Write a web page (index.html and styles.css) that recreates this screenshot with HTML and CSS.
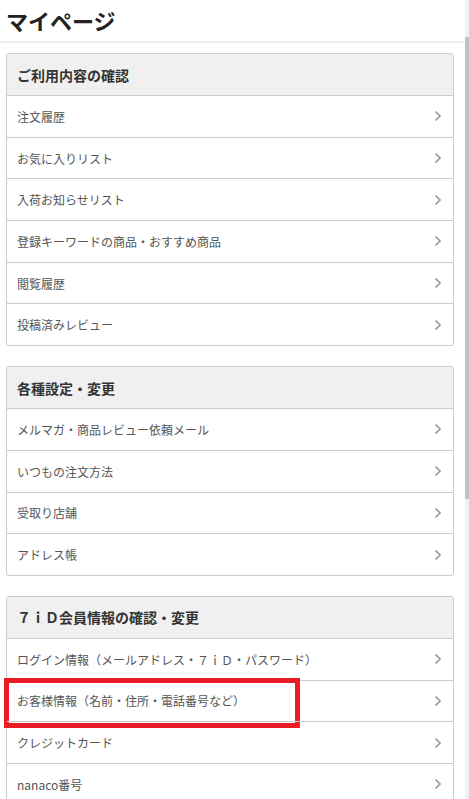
FILE: index.html
```html
<!DOCTYPE html>
<html lang="ja">
<head>
<meta charset="utf-8">
<title>マイページ</title>
<link rel="stylesheet" href="styles.css">
</head>
<body>
<div class="page">
  <header class="page-header">
    <h1 class="page-title">マイページ</h1>
  </header>
  <main class="content">
    <section class="card">
      <h2 class="card-title">ご利用内容の確認</h2>
      <a class="row" href="#"><span>注文履歴</span><svg class="chev" viewBox="0 0 8 12"><polyline points="1.5,1.5 6,6 1.5,10.5"/></svg></a>
      <a class="row" href="#"><span>お気に入りリスト</span><svg class="chev" viewBox="0 0 8 12"><polyline points="1.5,1.5 6,6 1.5,10.5"/></svg></a>
      <a class="row" href="#"><span>入荷お知らせリスト</span><svg class="chev" viewBox="0 0 8 12"><polyline points="1.5,1.5 6,6 1.5,10.5"/></svg></a>
      <a class="row" href="#"><span>登録キーワードの商品・おすすめ商品</span><svg class="chev" viewBox="0 0 8 12"><polyline points="1.5,1.5 6,6 1.5,10.5"/></svg></a>
      <a class="row" href="#"><span>閲覧履歴</span><svg class="chev" viewBox="0 0 8 12"><polyline points="1.5,1.5 6,6 1.5,10.5"/></svg></a>
      <a class="row" href="#"><span>投稿済みレビュー</span><svg class="chev" viewBox="0 0 8 12"><polyline points="1.5,1.5 6,6 1.5,10.5"/></svg></a>
    </section>
    <section class="card">
      <h2 class="card-title">各種設定・変更</h2>
      <a class="row" href="#"><span>メルマガ・商品レビュー依頼メール</span><svg class="chev" viewBox="0 0 8 12"><polyline points="1.5,1.5 6,6 1.5,10.5"/></svg></a>
      <a class="row" href="#"><span>いつもの注文方法</span><svg class="chev" viewBox="0 0 8 12"><polyline points="1.5,1.5 6,6 1.5,10.5"/></svg></a>
      <a class="row" href="#"><span>受取り店舗</span><svg class="chev" viewBox="0 0 8 12"><polyline points="1.5,1.5 6,6 1.5,10.5"/></svg></a>
      <a class="row" href="#"><span>アドレス帳</span><svg class="chev" viewBox="0 0 8 12"><polyline points="1.5,1.5 6,6 1.5,10.5"/></svg></a>
    </section>
    <section class="card">
      <h2 class="card-title">７ｉＤ会員情報の確認・変更</h2>
      <a class="row" href="#"><span>ログイン情報（メールアドレス・７ｉＤ・パスワード）</span><svg class="chev" viewBox="0 0 8 12"><polyline points="1.5,1.5 6,6 1.5,10.5"/></svg></a>
      <a class="row row-marked" href="#"><span>お客様情報（名前・住所・電話番号など）</span><svg class="chev" viewBox="0 0 8 12"><polyline points="1.5,1.5 6,6 1.5,10.5"/></svg><i class="highlight"></i></a>
      <a class="row" href="#"><span>クレジットカード</span><svg class="chev" viewBox="0 0 8 12"><polyline points="1.5,1.5 6,6 1.5,10.5"/></svg></a>
      <a class="row" href="#"><span>nanaco番号</span><svg class="chev" viewBox="0 0 8 12"><polyline points="1.5,1.5 6,6 1.5,10.5"/></svg></a>
    </section>
  </main>
</div>
<div class="scrollbar"><div class="scroll-thumb"></div></div>
</body>
</html>
```

FILE: styles.css
```css
html {
  overflow: hidden;
}
body {
  margin: 0;
  background: #fff;
  font-family: "Noto Sans CJK JP", "Noto Sans", sans-serif;
  color: #333;
}
.page {
  width: 465px;
}
.page-header {
  border-bottom: 2px solid #eeeeee;
  box-sizing: border-box;
  height: 43px;
  padding-left: 6px;
  display: flex;
  align-items: center;
}
.page-title {
  margin: 0;
  font-size: 22px;
  font-weight: bold;
  color: #222;
  line-height: 1;
  position: relative;
  top: -1px;
}
.content {
  padding: 10px 11px 0 6px;
}
.card {
  border: 1px solid #cccccc;
  border-radius: 3px;
  margin-bottom: 20px;
}
.card-title {
  margin: 0;
  height: 41px;
  background: #f0f0f0;
  border-radius: 3px 3px 0 0;
  font-size: 14px;
  font-weight: bold;
  color: #333;
  display: flex;
  align-items: center;
  padding-left: 10px;
}
.row {
  position: relative;
  display: flex;
  align-items: center;
  justify-content: space-between;
  height: 40.7px;
  border-top: 1px solid #cccccc;
  padding: 0 11px 0 10px;
  font-size: 12px;
  color: #555;
  text-decoration: none;
}
.chev {
  width: 8px;
  height: 12px;
  fill: none;
  stroke: #9a9a9a;
  stroke-width: 1.7;
}
.highlight {
  position: absolute;
  left: -3px;
  top: -3px;
  width: 296px;
  height: 50px;
  border: 5px solid #ea1d27;
  box-sizing: border-box;
  pointer-events: none;
}
.scrollbar {
  position: fixed;
  top: 0;
  right: 0;
  width: 4px;
  height: 100%;
  background: #f1f1f1;
}
.scroll-thumb {
  margin-top: 37px;
  height: 462px;
  background: #c1c1c1;
}
```
